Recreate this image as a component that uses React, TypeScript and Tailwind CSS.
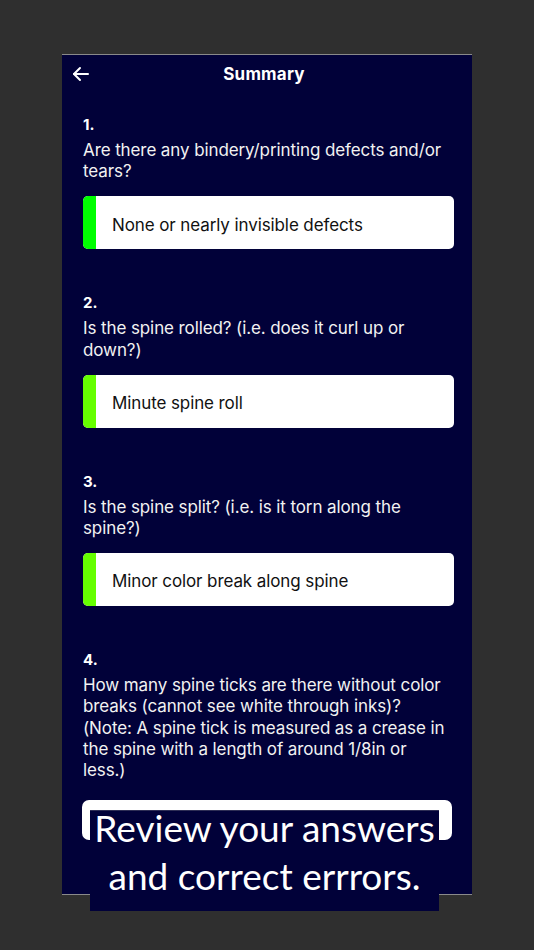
import React from "react";

type Item = { n: string; q: string[]; a: string; bar: string };

const items: Item[] = [
  { n: "1.", q: ["Are there any bindery/printing defects and/or", "tears?"], a: "None or nearly invisible defects", bar: "bg-[#00ff00]" },
  { n: "2.", q: ["Is the spine rolled? (i.e. does it curl up or", "down?)"], a: "Minute spine roll", bar: "bg-[#66ff00]" },
  { n: "3.", q: ["Is the spine split? (i.e. is it torn along the", "spine?)"], a: "Minor color break along spine", bar: "bg-[#66ff00]" },
];

const q4 = [
  "How many spine ticks are there without color",
  "breaks (cannot see white through inks)?",
  "(Note: A spine tick is measured as a crease in",
  "the spine with a length of around 1/8in or",
  "less.)",
];

export default function App() {
  return (
    <div className="relative w-[534px] h-[950px] bg-[#2f2f2f] overflow-hidden" style={{ fontFamily: "Inter, 'Liberation Sans', sans-serif" }}>
      <div className="absolute left-[62px] top-[54px] w-[410px] h-[841px] bg-[#010139] border-t border-b border-[#8a8a8a] flex flex-col">
        <div className="relative h-[38px] flex items-center justify-center">
          <svg className="absolute left-[10px] top-[11px]" width="18" height="16" viewBox="0 0 18 16" fill="none" stroke="white" strokeWidth="2" strokeLinecap="round" strokeLinejoin="round">
            <path d="M2 8h14" />
            <path d="M8 2 2 8l6 6" />
          </svg>
          <span className="text-white font-bold text-[17px] tracking-[0.2px] pt-[2px] -ml-[6px]">Summary</span>
        </div>
        <div className="px-[21px] pt-[21px] flex flex-col">
          {items.map((it) => (
            <div key={it.n} className="flex flex-col mb-[43px]">
              <div className="text-white font-bold text-[15px] leading-[21px]">{it.n}</div>
              <div className="mt-[5px] text-[#f2f2f2] text-[17px] tracking-[-0.1px] leading-[21.4px] whitespace-nowrap">
                {it.q.map((l) => (
                  <div key={l}>{l}</div>
                ))}
              </div>
              <div className="mt-[13.5px] h-[53px] w-[371px] bg-white rounded-[5px] overflow-hidden flex items-center">
                <div className={`${it.bar} w-[13px] h-full`} />
                <span className="ml-[16px] pt-[5px] text-[#111] text-[17px] tracking-[-0.1px]">{it.a}</span>
              </div>
            </div>
          ))}
          <div className="flex flex-col">
            <div className="text-white font-bold text-[15px] leading-[21px]">4.</div>
            <div className="mt-[5px] text-[#f2f2f2] text-[17px] tracking-[-0.1px] leading-[21.3px] whitespace-nowrap">
              {q4.map((l) => (
                <div key={l}>{l}</div>
              ))}
            </div>
            <div className="mt-[19px] -ml-[1px] h-[40px] w-[370px] bg-white rounded-[7px]" />
          </div>
        </div>
      </div>
      <div className="absolute left-[90px] top-[810px] w-[349px] h-[101px] bg-[#010139] border-t border-[#2e2e55] flex flex-col items-center">
        <div className="-mt-[7px] text-white text-[37px] leading-[48px] text-center whitespace-nowrap" style={{ fontFamily: "Lato, 'Open Sans', sans-serif" }}>
          <div>Review your answers</div>
          <div>and correct errrors.</div>
        </div>
      </div>
    </div>
  );
}
